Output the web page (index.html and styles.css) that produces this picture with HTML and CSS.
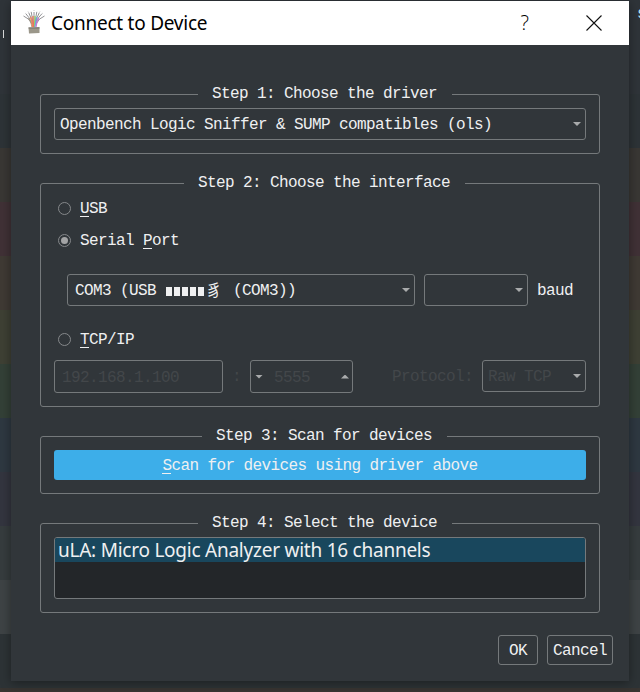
FILE: index.html
```
<!DOCTYPE html>
<html lang="en">
<head>
<meta charset="utf-8">
<title>Connect to Device</title>
<link rel="stylesheet" href="styles.css">
</head>
<body>
<div class="backdrop">
  <i class="row r0"></i><i class="row r1"></i><i class="row r2"></i><i class="row r3"></i><i class="row r4"></i><i class="row r5"></i><i class="row r6"></i><i class="row r7"></i><i class="row r8"></i><i class="row r9"></i><i class="row r10"></i><i class="row r11"></i><i class="row r12"></i>
  <i class="tick"></i><span class="behind">s</span>
</div>
<main class="dialog">
  <header class="titlebar">
    <svg class="logo" width="22" height="24" viewBox="0 0 22 24" fill="none">
      <g stroke="#77777b" stroke-width=".8">
        <path d="M9 14Q6 8 0.5 6M9 14Q6 6 2 3M9.5 14Q8 6 5 1.5M10 14Q9 5 8 1M11 14V.5M12 14Q13 5 14 1M12.500 14Q14 6 17 1.500M13 14Q15 6 20 3M13 14Q16 8 21.500 6" stroke-dasharray="12 1"/>
      </g>
      <path d="M9 17Q8 11 5.500 8" stroke="#a79b85"/>
      <path d="M9.500 17Q9 10 7.500 7" stroke="#ed8a61" stroke-width="1.500"/>
      <path d="M10.500 17L10 6" stroke="#f06c5c" stroke-width="1.200"/>
      <path d="M11.500 17L12 6" stroke="#91d26a" stroke-width="1.300"/>
      <path d="M12 17Q13 9 14 7" stroke="#66a9df" stroke-width="1.200"/>
      <path d="M13 17Q14 10 16 8" stroke="#c778d4" stroke-width="1.300"/>
      <path d="M5.500 17.500L16.500 17V23L6 23.500Z" fill="#9b978a"/>
      <path d="M5.500 18H16.500" stroke="#77736a"/>
    </svg>
    <h1>Connect to Device</h1>
    <span class="help">?</span>
    <svg class="close" width="16" height="16" viewBox="0 0 16 16"><path d="M.5.5l15 15M15.500.5l-15 15" stroke="#111" stroke-width="1.100"/></svg>
  </header>
  <form class="body">
    <fieldset class="g1">
      <legend>Step 1: Choose the driver</legend>
      <div class="box combo driver"><span>Openbench Logic Sniffer &amp; SUMP compatibles (ols)</span><i class="down"></i></div>
    </fieldset>
    <fieldset class="g2">
      <legend>Step 2: Choose the interface</legend>
      <div class="option usb"><i class="radio"></i><span><u>U</u>SB</span></div>
      <div class="option serial"><i class="radio on"></i><span>Serial <u>P</u>ort</span></div>
      <div class="ports">
        <div class="box combo port"><span>COM3 (USB <span class="blocks"><i></i><i></i><i></i><i></i><i></i></span><span class="han">豸</span> (COM3))</span><i class="down"></i></div>
        <div class="box combo rate"><i class="down"></i></div>
        <span>baud</span>
      </div>
      <div class="option tcp"><i class="radio"></i><span><u>T</u>CP/IP</span></div>
      <div class="network">
        <div class="box address"><span>192.168.1.100</span></div>
        <span class="colon">:</span>
        <div class="box spin"><i class="down"></i><span>5555</span><i class="up"></i></div>
        <span class="protocol">Protocol:</span>
        <div class="box combo raw"><span>Raw TCP</span><i class="down"></i></div>
      </div>
    </fieldset>
    <fieldset class="g3">
      <legend>Step 3: Scan for devices</legend>
      <div class="scan"><span><u>S</u>can for devices using driver above</span></div>
    </fieldset>
    <fieldset class="g4">
      <legend>Step 4: Select the device</legend>
      <div class="list"><div class="item">uLA: Micro Logic Analyzer with 16 channels</div></div>
    </fieldset>
    <div class="actions"><div class="box ok"><span>OK</span></div><div class="box cancel"><span>Cancel</span></div></div>
  </form>
</main>
</body>
</html>
```
FILE: styles.css
```
* { box-sizing: border-box; }
body {
  margin: 0;
  width: 640px;
  height: 692px;
  overflow: hidden;
  position: relative;
  background: #2f3438;
  color: #eff0f1;
  font: 16px/20px "Liberation Mono", "Noto Sans CJK SC", monospace;
  letter-spacing: -0.6px;
  padding: 1px 11px 0;
}
i { display: block; flex: none; }
.backdrop { position: absolute; inset: 0; overflow: hidden; }
.row { height: 54px; }
.r0 { height: 94px; background: #2f3439; }
.r1 { background: #2d3337; }
.r2 { background: #393734; }
.r3 { background: #403136; }
.r4 { background: #3f3a34; }
.r5 { background: #3e4034; }
.r6 { background: #334037; }
.r7 { background: #2e3841; }
.r8 { background: #33353f; }
.r9 { background: #363c3e; }
.r10 { background: #3e4345; }
.r11 { background: #2d3336; }
.r12 { height: 4px; background: #383431; }
.tick { position: absolute; left: 3px; top: 30px; width: 1px; height: 8px; background: #dcdddd; }
.behind { position: absolute; left: 637px; top: 4px; color: #bce3f5; }
.dialog {
  position: relative;
  width: 618px;
  height: 680px;
  background: #31363a;
  box-shadow: 0 2px 10px rgba(0,0,0,.38);
}
.titlebar {
  height: 44px;
  background: #fff;
  color: #000;
  display: flex;
  align-items: center;
  padding: 0 27px 0 12px;
}
.logo { margin-bottom: 2px; }
h1 {
  margin: 0 0 1px 6px;
  font: 19px/28px "Noto Sans", sans-serif;
  letter-spacing: -0.25px;
  flex: 1;
  white-space: nowrap;
}
.help { font: 300 20px/28px "Open Sans", "Noto Sans", sans-serif; letter-spacing: 0; margin-right: 57px; }
.body { padding: 39px 29px 0; }
fieldset { margin: 0; padding: 4px 13px 0; border: 1px solid #75797b; border-radius: 3px; min-width: 0; }
legend { padding: 0 15px 0 14px; height: 20px; line-height: 21px; white-space: nowrap; }
.g1 { height: 70px; margin-bottom: 19px; }
.g2 { height: 234px; margin-bottom: 19px; }
.g3 { height: 68px; margin-bottom: 19px; }
.g4 { height: 100px; }
.g1 legend, .g4 legend { margin-left: 144px; }
.g2 legend { margin-left: 130px; }
.g3 legend { margin-left: 148px; }
.box { border: 1px solid #75797b; border-radius: 3px; display: flex; align-items: center; white-space: pre; }
.box > span, .option > span, .ports > span, .scan > span { padding-top: 2px; }
.combo { justify-content: space-between; padding: 0 4px 0 5px; }
.driver { height: 32px; }
.down, .up { width: 8px; height: 4px; background: #a9abac; clip-path: polygon(0 0, 100% 0, 50% 100%); }
.up { clip-path: polygon(0 100%, 100% 100%, 50% 0); }
u { text-decoration: none; box-shadow: 0 -1px 0 #eff0f1 inset; display: inline-block; height: 18px; line-height: 20px; vertical-align: top; }
.option { display: flex; align-items: center; gap: 8px; height: 20px; padding-left: 4px; }
.radio { width: 13px; height: 13px; margin-right: 1px; border: 1px solid #85888a; border-radius: 50%; position: relative; }
.on::after { content: ""; position: absolute; inset: 2px; border-radius: 50%; background: #a3a4a5; }
.usb { margin-top: 1px; }
.serial { margin-top: 12px; }
.ports { display: flex; align-items: center; margin: 24px 0 0 13px; }
.port { width: 348px; height: 32px; margin-right: 9px; padding-left: 7px; }
.port > span { display: flex; align-items: center; }
.rate { width: 104px; height: 32px; margin-right: 9px; justify-content: flex-end; }
.blocks { display: flex; gap: 2px; margin: 0 2px 0 1px; }
.blocks i { width: 6px; height: 9px; background: #eff0f1; }
.han { font: 16px/20px "Noto Sans CJK SC", sans-serif; letter-spacing: 0; width: 18px; padding-bottom: 4px; height: 24px; }
.tcp { margin-top: 23px; }
.network { display: flex; color: #43474a; margin-top: 11px; }
.address { width: 169px; height: 33px; padding-left: 7px; }
.colon { width: 27px; padding-left: 9px; line-height: 35px; }
.spin { width: 103px; height: 33px; padding: 0 3px 0 4px; }
.spin > span { margin: 0 auto 0 11px; }
.protocol { width: 90px; margin-left: 39px; line-height: 35px; }
.raw { width: 104px; height: 32px; }
.scan { height: 30px; border-radius: 3px; background: #3daee9; display: flex; align-items: center; justify-content: center; }
.list { height: 62px; border: 1px solid #75797b; border-radius: 3px; background: #232629; overflow: hidden; }
.item { height: 24px; background: #19475d; padding-left: 3px; font: 19px/24px "Noto Sans", sans-serif; letter-spacing: -0.24px; white-space: nowrap; }
.actions { display: flex; justify-content: flex-end; gap: 9px; margin: 22px -13px 0 0; }
.actions .box { height: 30px; justify-content: center; }
.ok { width: 40px; }
.cancel { width: 66px; }
```
